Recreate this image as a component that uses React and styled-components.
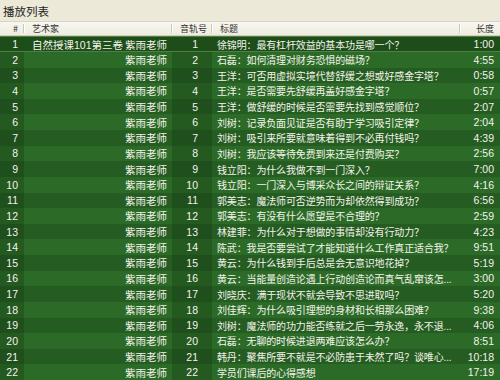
import React from 'react';
import styled, { createGlobalStyle } from 'styled-components';

const GlobalStyle = createGlobalStyle`
    body {
        margin: 0;
        background: #ece9d8;
    }
`;

const COLS = '24px 148px 40px 248px 40px';

const tracks = [
  ['徐锦明：最有杠杆效益的基本功是哪一个？', '1:00'],
  ['石磊：如何清理对财务恐惧的磁场？', '4:55'],
  ['王洋：可否用虚拟实境代替舒缓之想或好感金字塔？', '0:58'],
  ['王洋：是否需要先舒缓再盖好感金字塔？', '0:57'],
  ['王洋：做舒缓的时候是否需要先找到感觉顺位？', '2:07'],
  ['刘树：记录负面见证是否有助于学习吸引定律？', '2:04'],
  ['刘树：吸引来所要就意味着得到不必再付钱吗？', '4:39'],
  ['刘树：我应该等待免费到来还是付费购买？', '2:56'],
  ['钱立阳：为什么我做不到一门深入？', '7:00'],
  ['钱立阳：一门深入与博采众长之间的辩证关系？', '4:16'],
  ['郭美志：魔法师可否逆势而为却依然得到成功？', '6:56'],
  ['郭美志：有没有什么愿望是不合理的？', '2:59'],
  ['林建菲：为什么对于想做的事情却没有行动力？', '4:23'],
  ['陈武：我是否要尝试了才能知道什么工作真正适合我？', '9:51'],
  ['黄云：为什么钱到手后总是会无意识地花掉？', '5:19'],
  ['黄云：当能量创造论遇上行动创造论而真气乱窜该怎...', '3:00'],
  ['刘晓庆：满于现状不就会导致不思进取吗？', '5:20'],
  ['刘佳辉：为什么吸引理想的身材和长相那么困难？', '9:38'],
  ['刘树：魔法师的功力能否练就之后一劳永逸，永不退...', '4:06'],
  ['石磊：无聊的时候进退两难应该怎么办？', '8:51'],
  ['韩丹：聚焦所要不就是不必防患于未然了吗？谈唯心...', '10:18'],
  ['学员们课后的心得感想', '17:19'],
];

const Panel = styled.div`
    width: 500px;
    height: 380px;
    overflow: hidden;
    display: flex;
    flex-direction: column;
    background: #ece9d8;
    font-family: "Liberation Sans", "Noto Sans CJK SC", sans-serif;
`;

const TitleBar = styled.div`
    height: 22px;
    padding-left: 3px;
    display: flex;
    align-items: center;
    font-size: 11.5px;
    color: #1e1e1e;
    font-family: "Noto Sans CJK SC", sans-serif;
`;

const HeaderRow = styled.div`
    display: grid;
    grid-template-columns: ${COLS};
    height: 13px;
    border-top: 1px solid #d8d5c4;
    border-bottom: 1px solid #cfccba;
    background: linear-gradient(#f8f7f0, #eeecdf);
`;

const HeadCell = styled.div`
    position: relative;
    display: flex;
    align-items: center;
    justify-content: ${p => (p.right ? 'flex-end' : 'flex-start')};
    padding: ${p => (p.right ? '0 6px 0 0' : '0 0 0 8px')};
    font-size: 9px;
    color: #333;
    font-family: "Noto Sans CJK SC", sans-serif;

    &::after {
        content: '';
        display: ${p => (p.last ? 'none' : 'block')};
        position: absolute;
        right: 0;
        top: 2px;
        bottom: 2px;
        width: 1px;
        background: #cbc8b6;
        box-shadow: 1px 0 0 #ffffff;
    }
`;

const Body = styled.div`
    flex: 1;
    display: grid;
    grid-auto-rows: 15.64px;
`;

const Row = styled.div`
    display: grid;
    grid-template-columns: ${COLS};
    font-size: 10.5px;
    color: #f3f3ea;
    background: ${p => (p.selected ? '#1d4d19' : p.odd ? '#255c21' : '#2c6b27')};
    box-shadow: ${p => (p.selected ? 'inset 0 1px 0 #4f7f47, inset 0 -1px 0 #4f7f47' : 'none')};
`;

const Cell = styled.div`
    display: flex;
    align-items: center;
    justify-content: ${p => p.align || 'flex-start'};
    padding: ${p => p.pad || '0'};
    white-space: nowrap;
    overflow: hidden;
    background: ${p => (p.shade && !p.selected ? (p.odd ? '#1f4f1c' : '#245a20') : 'transparent')};
`;

const TitleCell = styled.div`
    display: flex;
    align-items: center;
    padding-left: 5px;
    font-size: 10px;
    letter-spacing: -0.15px;
    white-space: nowrap;
    overflow: hidden;
`;

const Album = styled.span`
    flex: 1;
`;

const App = () => (
  <Panel>
    <GlobalStyle />
    <TitleBar>播放列表</TitleBar>
    <HeaderRow>
      <HeadCell right>#</HeadCell>
      <HeadCell>艺术家</HeadCell>
      <HeadCell>音轨号</HeadCell>
      <HeadCell>标题</HeadCell>
      <HeadCell right last>长度</HeadCell>
    </HeaderRow>
    <Body>
      {tracks.map(([title, len], i) => {
        const n = i + 1;
        const odd = n % 2 === 1;
        const selected = n === 1;
        return (
          <Row key={n} odd={odd} selected={selected}>
            <Cell shade odd={odd} selected={selected} align="flex-end" pad="0 6px 0 0">{n}</Cell>
            <Cell pad="0 5px 0 8px">
              <Album>{selected ? '自然授课101第三卷' : ''}</Album>
              紫雨老师
            </Cell>
            <Cell shade odd={odd} selected={selected} align="flex-end" pad="0 14px 0 0">{n}</Cell>
            <TitleCell>{title}</TitleCell>
            <Cell align="flex-end" pad="0 6px 0 0">{len}</Cell>
          </Row>
        );
      })}
    </Body>
  </Panel>
);

export default App;
